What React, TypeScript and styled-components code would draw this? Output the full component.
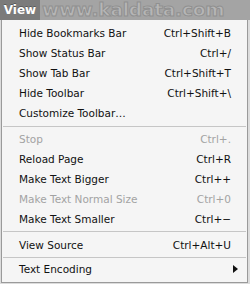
import React from "react";
import styled, { createGlobalStyle } from "styled-components";

const Global = createGlobalStyle`
  html, body { margin: 0; padding: 0; background: #dcdcdc; }
  body { width: 250px; height: 284px; overflow: hidden; }
`;

const Page = styled.div`
  width: 250px;
  height: 284px;
  display: flex;
  flex-direction: column;
  font-family: "DejaVu Sans", "Liberation Sans", sans-serif;
  background: #dcdcdc;
`;

const TopBar = styled.div`
  height: 20px;
  flex-shrink: 0;
  display: flex;
  align-items: stretch;
  background: #a4a4a4;
  overflow: hidden;
`;

const Tab = styled.div`
  width: 40px;
  display: flex;
  align-items: center;
  justify-content: center;
  background: #7b7b7b;
  color: #ffffff;
  font-weight: bold;
  font-size: 12px;
  text-shadow: 0 -1px 0 #5a5a5a;
`;

const Watermark = styled.div`
  margin-left: 2px;
  font-family: "DejaVu Sans", sans-serif;
  font-weight: bold;
  font-size: 18.5px;
  line-height: 20px;
  letter-spacing: -0.2px;
  color: #b6b6b6;
  -webkit-text-stroke: 1px #909090;
  white-space: nowrap;
`;

const Menu = styled.div`
  width: 247px;
  margin-left: 1px;
  box-sizing: border-box;
  border-left: 1px solid #9a9a9a;
  border-right: 1px solid #9a9a9a;
  border-bottom: 1px solid #9a9a9a;
  background: #f5f5f5;
  padding: 3px 0 3px 0;
  display: flex;
  flex-direction: column;
`;

const Row = styled.div<{ $disabled?: boolean }>`
  height: 20px;
  flex-shrink: 0;
  display: flex;
  align-items: center;
  padding: 0 16px 0 17px;
  font-size: 10.5px;
  color: ${(p) => (p.$disabled ? "#a3a3a3" : "#111111")};
`;

const Label = styled.span`
  flex: 1;
`;

const Shortcut = styled.span`
  text-align: right;
`;

const Separator = styled.div<{ $top: number; $bottom: number }>`
  height: 1px;
  flex-shrink: 0;
  background: #c6c6c6;
  margin: ${(p) => p.$top}px 1px ${(p) => p.$bottom}px 1px;
`;

const Arrow = styled.span`
  width: 0;
  height: 0;
  border-top: 4px solid transparent;
  border-bottom: 4px solid transparent;
  border-left: 5px solid #111;
  margin-right: -7px;
`;

type Item = { label: string; sc?: string; disabled?: boolean };

const group1: Item[] = [
  { label: "Hide Bookmarks Bar", sc: "Ctrl+Shift+B" },
  { label: "Show Status Bar", sc: "Ctrl+/" },
  { label: "Show Tab Bar", sc: "Ctrl+Shift+T" },
  { label: "Hide Toolbar", sc: "Ctrl+Shift+\\" },
  { label: "Customize Toolbar…" },
];

const group2: Item[] = [
  { label: "Stop", sc: "Ctrl+.", disabled: true },
  { label: "Reload Page", sc: "Ctrl+R" },
  { label: "Make Text Bigger", sc: "Ctrl++" },
  { label: "Make Text Normal Size", sc: "Ctrl+0", disabled: true },
  { label: "Make Text Smaller", sc: "Ctrl+−" },
];

const renderItem = (it: Item) => (
  <Row key={it.label} $disabled={it.disabled}>
    <Label>{it.label}</Label>
    {it.sc && <Shortcut>{it.sc}</Shortcut>}
  </Row>
);

export default function App() {
  return (
    <Page>
      <Global />
      <TopBar>
        <Tab>View</Tab>
        <Watermark>www.kaldata.com</Watermark>
      </TopBar>
      <Menu>
        {group1.map(renderItem)}
        <Separator $top={3} $bottom={2} />
        {group2.map(renderItem)}
        <Separator $top={2} $bottom={3} />
        {renderItem({ label: "View Source", sc: "Ctrl+Alt+U" })}
        <Separator $top={2} $bottom={1} />
        <Row>
          <Label>Text Encoding</Label>
          <Arrow />
        </Row>
      </Menu>
    </Page>
  );
}
